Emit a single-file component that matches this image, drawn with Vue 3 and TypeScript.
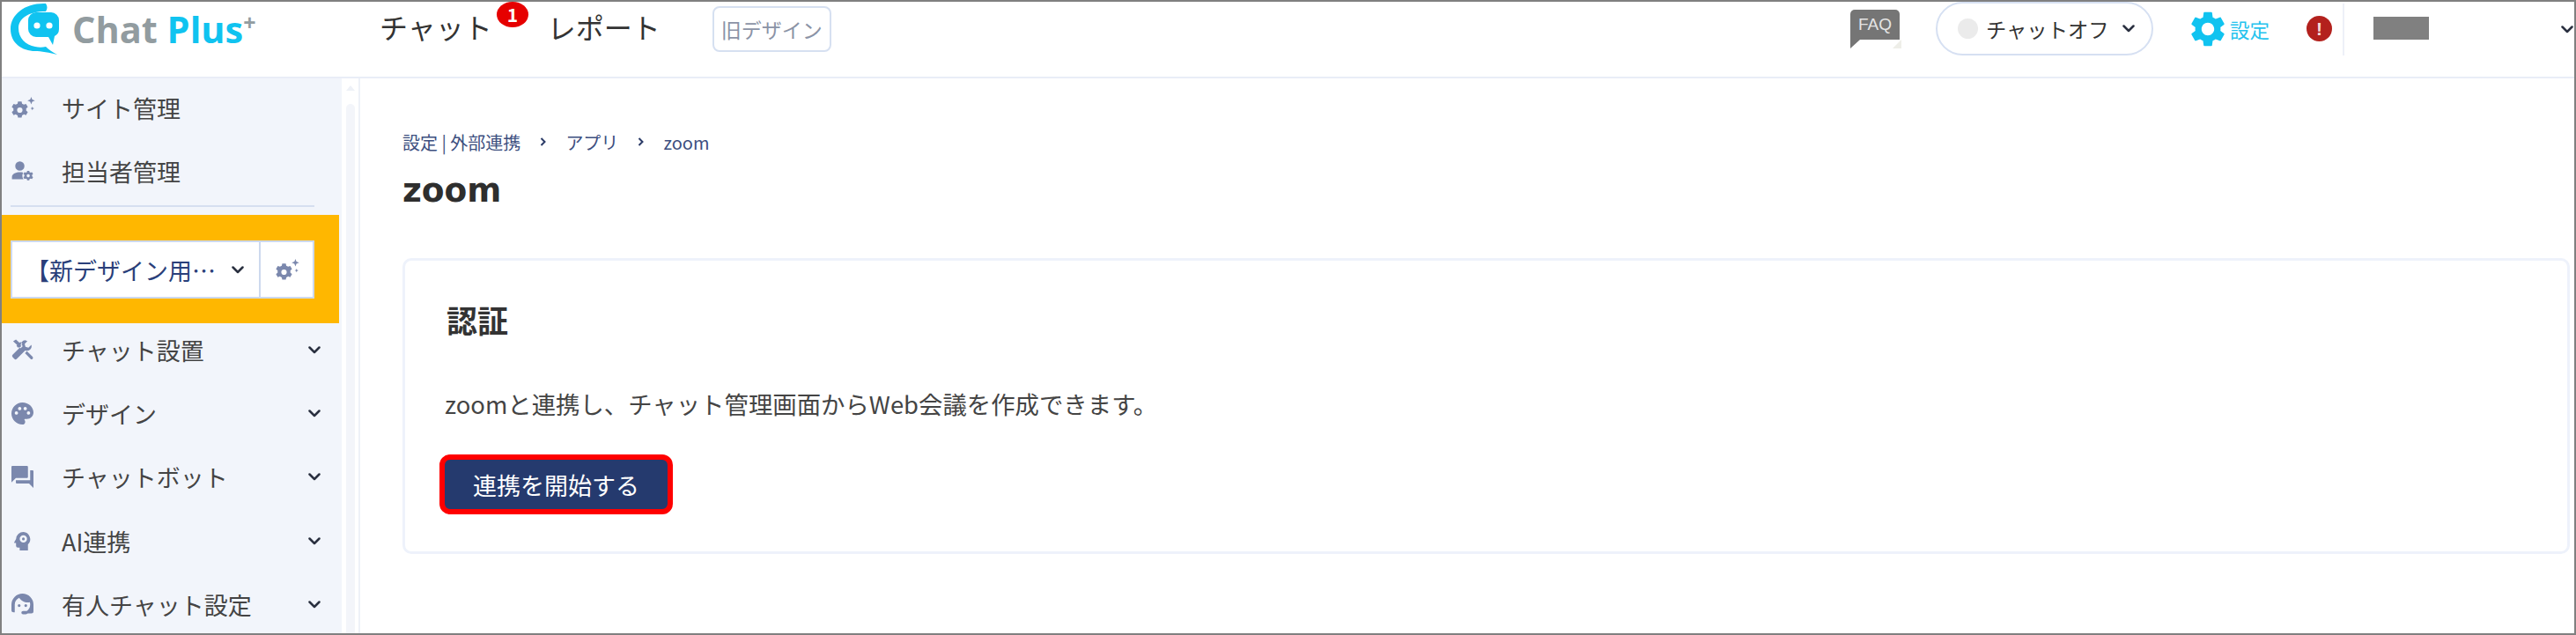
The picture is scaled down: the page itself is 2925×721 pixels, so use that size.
<script setup lang="ts">
interface NavItem {
  label: string
  icon: string
  box: string
}

const gear =
  'M19.14 12.94c.04-.3.06-.61.06-.94 0-.32-.02-.64-.07-.94l2.03-1.58c.18-.14.23-.41.12-.61l-1.92-3.32c-.12-.22-.37-.29-.59-.22l-2.39.96c-.5-.38-1.03-.7-1.62-.94l-.36-2.54c-.04-.24-.24-.41-.48-.41h-3.84c-.24 0-.43.17-.47.41l-.36 2.54c-.59.24-1.13.57-1.62.94l-2.39-.96c-.22-.08-.47 0-.59.22L2.74 8.87c-.12.21-.08.47.12.61l2.03 1.58c-.05.3-.09.63-.09.94s.02.64.07.94l-2.03 1.58c-.18.14-.23.41-.12.61l1.92 3.32c.12.22.37.29.59.22l2.39-.96c.5.38 1.03.7 1.62.94l.36 2.54c.05.24.24.41.48.41h3.84c.24 0 .44-.17.47-.41l.36-2.54c.59-.24 1.13-.56 1.62-.94l2.39.96c.22.08.47 0 .59-.22l1.92-3.32c.12-.22.07-.47-.12-.61l-2.01-1.58zM12 15.6c-1.98 0-3.6-1.62-3.6-3.6s1.62-3.6 3.6-3.6 3.6 1.62 3.6 3.6-1.62 3.6-3.6 3.6z'

const gearSpark =
  'M10 7.5l.4 2a6 6 0 0 1 1.6.9l1.9-.7 1.6 2.8-1.5 1.3a6 6 0 0 1 0 1.8l1.5 1.3-1.6 2.8-1.9-.7a6 6 0 0 1-1.6.9l-.4 2H6.8l-.4-2a6 6 0 0 1-1.6-.9l-1.9.7-1.6-2.8 1.5-1.3a6 6 0 0 1 0-1.8L1.3 12.5l1.6-2.8 1.9.7a6 6 0 0 1 1.6-.9l.4-2zM8.4 12.8a2.400 2.400 0 1 0 0 4.800 2.400 2.400 0 0 0 0-4.800zM18.500 3.500l.9 2.400 2.400.9-2.400.9-.9 2.400-.9-2.400-2.400-.9 2.400-.9zM19.500 12l.5 1.200 1.200.5-1.200.5-.5 1.200-.5-1.200-1.200-.5 1.200-.5z'

const personGear =
  'M9.5 3.5a4.4 4.4 0 1 1 0 8.8 4.4 4.4 0 0 1 0-8.8zM9.5 13.8c1.2 0 2.300.1 3.200.4a6 6 0 0 0 .3 6.300H2v-2.300c0-3 4.300-4.400 7.500-4.400zM18.500 12.500l.3 1.300c.4.1.7.300 1 .5l1.300-.4 1 1.700-1 .9c.1.4.1.800 0 1.200l1 .9-1 1.700-1.300-.4c-.3.2-.6.4-1 .5l-.3 1.300h-2l-.3-1.300c-.4-.1-.7-.3-1-.5l-1.300.4-1-1.700 1-.9a3 3 0 0 1 0-1.200l-1-.9 1-1.700 1.300.4c.3-.2.6-.4 1-.5l.3-1.300zM17.500 15.800a1.500 1.500 0 1 0 0 3 1.500 1.500 0 0 0 0-3z'

const tools =
  'M3.200 3.800 6 2l3.600 3.200.9-.8 1.900 1.900-.9.9 1.300 1.300-2.200 2.200-1.300-1.300-.8.8L6.500 8.300l.7-.8zM15.500 2.500a4.700 4.700 0 0 0-4.400 6.300L2.700 17.200a1.700 1.700 0 0 0 0 2.400l1.700 1.700a1.700 1.700 0 0 0 2.400 0l8.400-8.400a4.700 4.700 0 0 0 6.200-5.700l-2.900 2.900-3-.8-.8-3 2.800-2.800a4.700 4.700 0 0 0-1-.200zM15 15.600l5.600 5.600a1.400 1.400 0 0 0 2-2L17 13.600z'

const palette =
  'M12 2C6.490 2 2 6.490 2 12s4.490 10 10 10c1.380 0 2.500-1.120 2.500-2.500 0-.61-.23-1.200-.64-1.670-.08-.1-.13-.21-.13-.33 0-.28.22-.5.5-.5H16c3.310 0 6-2.690 6-6 0-4.960-4.490-9-10-9zm-5.500 11c-.83 0-1.500-.67-1.500-1.500S5.670 10 6.500 10s1.500.67 1.500 1.500S7.330 13 6.500 13zm3-4C8.670 9 8 8.330 8 7.500S8.670 6 9.500 6s1.500.67 1.500 1.500S10.330 9 9.500 9zm5 0c-.83 0-1.500-.67-1.500-1.500S13.670 6 14.500 6s1.500.67 1.500 1.500S15.330 9 14.500 9zm3 4c-.83 0-1.500-.67-1.500-1.500s.67-1.500 1.500-1.500 1.500.67 1.500 1.500-.67 1.500-1.500 1.500z'

const forum =
  'M21 6h-2v9H6v2c0 .55.45 1 1 1h11l4 4V7c0-.55-.45-1-1-1zm-4 6V3c0-.55-.45-1-1-1H3c-.55 0-1 .45-1 1v14l4-4h10c.55 0 1-.45 1-1z'

const aiHead =
  'M13 2a8 8 0 0 0-8 7.500L3 13.200c-.2.400.1.800.5.800H5v3a2 2 0 0 0 2 2h2v3h9v-6.300A8 8 0 0 0 13 2zM13 5.500a4 4 0 1 1 0 8 4 4 0 0 1 0-8zM13 8a1.500 1.500 0 1 0 0 3 1.500 1.500 0 0 0 0-3z'

const agent =
  'M12 2a10 10 0 0 0-10 10v5a2 2 0 0 0 2 2h1v-7a7 7 0 0 1 4-6.300C10.500 8 13.500 10 17 10c.6 0 1.200-.1 1.700-.2.200.7.300 1.400.3 2.200a7 7 0 0 1-3 5.700h-3.500a1.500 1.500 0 0 0 0 3H15c.5 0 1-.2 1.400-.5l.6-.2h3a2 2 0 0 0 2-2v-6A10 10 0 0 0 12 2zM9 11.500a1.300 1.300 0 1 0 0 2.600 1.300 1.300 0 0 0 0-2.600zM15 11.500a1.300 1.300 0 1 0 0 2.600 1.300 1.300 0 0 0 0-2.600z'

const gearBox = '1 3.500 19.500 19.500'

const topItems: NavItem[] = [
  { label: 'サイト管理', icon: gearSpark, box: gearBox },
  { label: '担当者管理', icon: personGear, box: '1.500 2.500 21 21' },
]

const menuItems: NavItem[] = [
  { label: 'チャット設置', icon: tools, box: '1.500 1.500 22 22' },
  { label: 'デザイン', icon: palette, box: '2 2 20 20' },
  { label: 'チャットボット', icon: forum, box: '2 2 20 20' },
  { label: 'AI連携', icon: aiHead, box: '0 1 24 22' },
  { label: '有人チャット設定', icon: agent, box: '2 2 20 20' },
]
</script>

<template>
  <div class="frame">
    <header class="topbar">
      <div class="brand">
        <svg class="logo-mark" viewBox="0 0 53 58" aria-hidden="true">
          <path
            d="M40 0C17 -1 0 12 0 29c0 16 13 25 28 25 6 0 17 2 25 4-6-3-10-6-13-9-4 1-8 1-12 0C17 47 9 39 9 28 9 17 20 9 40 9c2-3 2-6 0-9z"
            fill="#10c3f0"
          />
          <path
            d="M29 10h17a9 9 0 0 1 9 9v10a9 9 0 0 1-5 8l-2 10-5-9H29a9 9 0 0 1-9-9V19a9 9 0 0 1 9-9z"
            fill="#10c3f0"
          />
          <circle cx="30" cy="25" r="3.600" fill="#fff" />
          <circle cx="44" cy="25" r="3.600" fill="#fff" />
        </svg>
        <span class="logo-text"><span class="logo-chat">Chat</span> <span class="logo-plus">Plus<sup>+</sup></span></span>
      </div>

      <nav class="main-nav">
        <span class="nav-link nav-chat">チャット<span class="badge">1</span></span>
        <span class="nav-link">レポート</span>
        <span class="old-design">旧デザイン</span>
      </nav>

      <div class="tools">
        <div class="faq"><span>FAQ</span></div>
        <div class="status-pill">
          <span class="status-dot"></span>
          <span>チャットオフ</span>
          <svg class="chev" viewBox="0 0 14 9" aria-hidden="true"><polyline points="1.500,1.500 7,7 12.500,1.500" /></svg>
        </div>
        <div class="settings">
          <svg class="settings-gear" viewBox="2 2 20 20" aria-hidden="true"><path :d="gear" /></svg>
          <span>設定</span>
        </div>
        <div class="alert">!</div>
        <div class="account">
          <span class="account-mask"></span>
          <svg class="chev" viewBox="0 0 14 9" aria-hidden="true"><polyline points="1.500,1.500 7,7 12.500,1.500" /></svg>
        </div>
      </div>
    </header>

    <div class="body">
      <aside class="sidebar">
        <ul class="menu menu-top">
          <li v-for="item in topItems" :key="item.label" class="menu-row">
            <svg class="menu-icon" :viewBox="item.box" aria-hidden="true"><path :d="item.icon" fill-rule="evenodd" /></svg>
            <span>{{ item.label }}</span>
          </li>
        </ul>
        <div class="side-divider"></div>
        <div class="site-band">
          <div class="site-select">
            <div class="site-name">
              <span>【新デザイン用…</span>
              <svg class="chev" viewBox="0 0 14 9" aria-hidden="true"><polyline points="1.500,1.500 7,7 12.500,1.500" /></svg>
            </div>
            <div class="site-gear">
              <svg class="menu-icon" :viewBox="gearBox" aria-hidden="true"><path :d="gearSpark" fill-rule="evenodd" /></svg>
            </div>
          </div>
        </div>
        <ul class="menu">
          <li v-for="item in menuItems" :key="item.label" class="menu-row">
            <svg class="menu-icon" :viewBox="item.box" aria-hidden="true"><path :d="item.icon" fill-rule="evenodd" /></svg>
            <span class="menu-label">{{ item.label }}</span>
            <svg class="chev" viewBox="0 0 14 9" aria-hidden="true"><polyline points="1.500,1.500 7,7 12.500,1.500" /></svg>
          </li>
        </ul>
      </aside>

      <div class="scroll-track">
        <span class="scroll-up"></span>
        <span class="scroll-thumb"></span>
      </div>

      <main class="content">
        <div class="crumbs">
          <span>設定 | 外部連携</span>
          <svg class="crumb-sep" viewBox="0 0 7 10" aria-hidden="true"><polyline points="1.500,1 5.500,5 1.500,9" /></svg>
          <span>アプリ</span>
          <svg class="crumb-sep" viewBox="0 0 7 10" aria-hidden="true"><polyline points="1.500,1 5.500,5 1.500,9" /></svg>
          <span>zoom</span>
        </div>
        <h1 class="page-title">zoom</h1>
        <section class="card">
          <h2 class="card-title">認証</h2>
          <p class="card-text">zoomと連携し、チャット管理画面からWeb会議を作成できます。</p>
          <button class="start-btn" type="button">連携を開始する</button>
        </section>
      </main>
    </div>
  </div>
</template>

<style>
html,
body {
  margin: 0;
  background: #fff;
}
</style>

<style scoped>
.frame {
  width: 2925px;
  height: 721px;
  box-sizing: border-box;
  border: 2px solid #808080;
  overflow: hidden;
  display: flex;
  flex-direction: column;
  background: #fff;
  color: #3c3c3c;
  font-family: "Noto Sans CJK JP", "Noto Sans", sans-serif;
}

/* header */
.topbar {
  flex: none;
  height: 61px;
  padding-bottom: 24px;
  border-bottom: 2px solid #e9edf7;
  display: flex;
  align-items: center;
}
.brand {
  width: 429px;
  padding-left: 10px;
  box-sizing: border-box;
  flex: none;
  display: flex;
  align-items: center;
  gap: 17px;
}
.logo-mark {
  width: 53px;
  height: 58px;
  flex: none;
  overflow: visible;
}
.logo-text {
  font-family: "Open Sans", sans-serif;
  font-size: 41.500px;
  font-weight: 700;
  line-height: 50px;
  white-space: nowrap;
}
.logo-chat {
  color: #929ca0;
}
.logo-plus {
  color: #10c3f0;
}
.logo-plus sup {
  color: #929ca0;
  font-size: 25px;
  font-weight: 700;
  line-height: 0;
  vertical-align: 14px;
}
.main-nav {
  display: flex;
  align-items: center;
}
.nav-link {
  font-size: 32px;
  line-height: 44px;
  margin-bottom: 5px;
  color: #333;
  white-space: nowrap;
}
.nav-chat {
  position: relative;
  margin-right: 63px;
}
.badge {
  position: absolute;
  left: 133px;
  top: -6px;
  width: 36px;
  height: 29px;
  border-radius: 50%;
  background: #e60000;
  color: #fff;
  font-size: 21px;
  font-weight: 700;
  line-height: 28px;
  text-align: center;
}
.old-design {
  margin-left: 59px;
  width: 135px;
  height: 52px;
  box-sizing: border-box;
  border: 2px solid #d6e0f1;
  border-radius: 8px;
  display: flex;
  align-items: center;
  justify-content: center;
  font-size: 23px;
  color: #8b93a6;
  white-space: nowrap;
}
.tools {
  margin-left: auto;
  display: flex;
  align-items: center;
  height: 61px;
}
.faq {
  position: relative;
  width: 56px;
  height: 34px;
  margin-top: -10px;
  margin-right: 41px;
  border-radius: 5px 5px 0 0;
  background: #757575;
  color: #e4e4e4;
  font-family: "Liberation Sans", sans-serif;
  font-size: 19px;
  line-height: 34px;
  text-align: center;
}
.faq::before {
  content: "";
  position: absolute;
  left: 0;
  top: 34px;
  border-top: 10px solid #757575;
  border-right: 11px solid transparent;
}
.faq::after {
  content: "";
  position: absolute;
  right: -2px;
  top: 34px;
  border-top: 10px solid #eeeee8;
  border-left: 10px solid transparent;
  transform: scaleY(-1);
}
.status-pill {
  width: 247px;
  height: 61px;
  box-sizing: border-box;
  border: 2px solid #d6e0f2;
  border-radius: 31px;
  padding-left: 23px;
  display: flex;
  align-items: center;
  font-size: 23.300px;
  color: #333;
  white-space: nowrap;
}
.status-dot {
  width: 23px;
  height: 23px;
  margin-right: 9px;
  border-radius: 50%;
  background: #ebebeb;
}
.status-pill .chev {
  margin-left: 15px;
}
.chev {
  flex: none;
  width: 14px;
  height: 9px;
}
.chev polyline {
  fill: none;
  stroke: #2a3040;
  stroke-width: 2.500;
  stroke-linecap: round;
  stroke-linejoin: round;
}
.settings {
  margin-left: 42px;
  display: flex;
  align-items: center;
  gap: 5px;
  color: #25c3ee;
  font-size: 22.500px;
  white-space: nowrap;
}
.settings-gear {
  width: 40px;
  height: 40px;
  fill: #10c3f0;
}
.alert {
  margin-left: 42px;
  width: 29px;
  height: 29px;
  border-radius: 50%;
  background: #b3211d;
  color: #f6dcdc;
  font-family: "Liberation Sans", sans-serif;
  font-size: 21px;
  font-weight: 700;
  line-height: 29px;
  text-align: center;
}
.account {
  margin-left: 12px;
  width: 263px;
  height: 59px;
  margin-top: 2px;
  box-sizing: border-box;
  border-left: 2px solid #edf0f8;
  display: flex;
  align-items: center;
  justify-content: space-between;
  padding-left: 33px;
  padding-right: 1px;
}
.account-mask {
  width: 63px;
  height: 26px;
  margin-top: -4px;
  background: #808080;
}

/* body */
.body {
  flex: 1;
  min-height: 0;
  display: flex;
}
.sidebar {
  flex: none;
  width: 386px;
  padding-top: 4px;
  box-sizing: border-box;
  background: #f2f5fb;
  display: flex;
  flex-direction: column;
}
.menu {
  list-style: none;
  margin: 0 3px 0 0;
  padding: 0;
  display: flex;
  flex-direction: column;
  gap: 12.250px;
}
.menu-top {
  margin-bottom: 9px;
  margin-top: -1px;
}
.menu-row {
  flex: none;
  height: 60px;
  padding-left: 11px;
  padding-right: 21px;
  display: flex;
  align-items: center;
  font-size: 27px;
  color: #444;
  white-space: nowrap;
}
.menu-row > .menu-icon {
  margin-right: 32px;
}
.menu-icon {
  flex: none;
  width: 25px;
  height: 25px;
  fill: #7b88ad;
  overflow: visible;
}
.menu-label {
  flex: 1;
}
.side-divider {
  flex: none;
  height: 2px;
  margin-left: 10px;
  width: 345px;
  background: #d6dff0;
}
.site-band {
  flex: none;
  height: 123px;
  margin-top: 9px;
  margin-right: 3px;
  margin-bottom: 0;
  padding: 29px 28px 28px 10px;
  box-sizing: border-box;
  background: #ffb700;
}
.site-select {
  height: 66px;
  box-sizing: border-box;
  border: 2px solid #cdd9ee;
  background: #fff;
  display: flex;
}
.site-name {
  flex: 1;
  min-width: 0;
  padding-left: 15px;
  padding-right: 17px;
  display: flex;
  align-items: center;
  justify-content: space-between;
  color: #2a3f7a;
  font-size: 27px;
  white-space: nowrap;
}
.site-gear {
  flex: none;
  width: 59px;
  border-left: 2px solid #cdd9ee;
  display: flex;
  align-items: center;
  justify-content: center;
}
.scroll-track {
  flex: none;
  width: 21px;
  box-sizing: border-box;
  border-right: 2px solid #eef1f8;
  padding-left: 5px;
  display: flex;
  flex-direction: column;
  align-items: flex-start;
}
.scroll-up {
  margin-top: 8px;
  border-left: 5px solid transparent;
  border-right: 5px solid transparent;
  border-bottom: 6px solid #eef1f7;
}
.scroll-thumb {
  flex: 1;
  width: 10px;
  margin-top: 15px;
  border-radius: 5px 5px 0 0;
  background: #f3f5fa;
}

/* content */
.content {
  flex: 1;
  min-width: 0;
  padding: 57px 5px 0 48px;
}
.crumbs {
  height: 30px;
  display: flex;
  align-items: center;
  font-size: 20px;
  color: #3d4f7f;
  white-space: nowrap;
}
.crumb-sep {
  width: 7px;
  height: 10px;
  margin: 0 22px;
}
.crumb-sep polyline {
  fill: none;
  stroke: #2a3a66;
  stroke-width: 2;
}
.page-title {
  margin: 10px 0 47px;
  font-family: "DejaVu Sans", sans-serif;
  font-size: 37.500px;
  font-weight: 700;
  line-height: 60px;
  color: #2e2e2e;
}
.card {
  height: 336px;
  box-sizing: border-box;
  border: 3px solid #eef2fb;
  border-radius: 10px;
  padding: 42px 47px 0;
}
.card-title {
  margin: 0;
  font-size: 35px;
  font-weight: 700;
  line-height: 50px;
  color: #333;
}
.card-text {
  margin: 50px 0 38px -2px;
  font-size: 27.400px;
  line-height: 40px;
  color: #444;
}
.start-btn {
  display: block;
  width: 265px;
  height: 68px;
  margin-left: -8px;
  padding: 0;
  box-sizing: border-box;
  border: 6px solid #ff0000;
  border-radius: 12px;
  background: #253a6e;
  color: #fff;
  font-family: inherit;
  font-size: 27px;
}
</style>
